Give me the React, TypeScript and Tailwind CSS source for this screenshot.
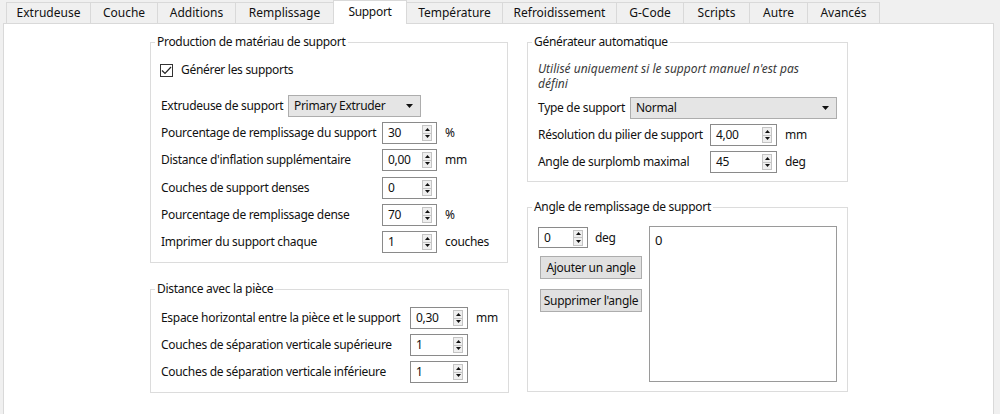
import React from "react";

const tabs = [
  { label: "Extrudeuse", w: "w-[85px]" },
  { label: "Couche", w: "w-[68px]" },
  { label: "Additions", w: "w-[79px]" },
  { label: "Remplissage", w: "w-[99px]" },
  { label: "Support", w: "w-[74px]", active: true },
  { label: "Température", w: "w-[97px]" },
  { label: "Refroidissement", w: "w-[115px]" },
  { label: "G-Code", w: "w-[68px]" },
  { label: "Scripts", w: "w-[67px]" },
  { label: "Autre", w: "w-[59px]" },
  { label: "Avancés", w: "w-[73px]" },
];

function SpinArrows() {
  return (
    <div className="w-[10px] h-[16px] mr-[4px] flex flex-col border border-[#c4c4c4] bg-[#efefef]">
      <div className="flex-1 flex items-center justify-center border-b border-[#c4c4c4]">
        <svg width="5" height="3" viewBox="0 0 5 3">
          <path d="M0 3 L2.5 0 L5 3 Z" fill="#111" />
        </svg>
      </div>
      <div className="flex-1 flex items-center justify-center">
        <svg width="5" height="3" viewBox="0 0 5 3">
          <path d="M0 0 L5 0 L2.5 3 Z" fill="#111" />
        </svg>
      </div>
    </div>
  );
}

function Spin({ value, w, h = "h-[22px]" }: { value: string; w: string; h?: string }) {
  return (
    <div className={`flex ${h} ${w} shrink-0 items-center border border-[#8a8a8a] bg-white`}>
      <span className="flex-1 pl-[5px] leading-none">{value}</span>
      <SpinArrows />
    </div>
  );
}

function Combo({ value, w }: { value: string; w: string }) {
  return (
    <div className={`flex h-[22px] ${w} shrink-0 items-center border border-[#adadad] bg-[#e5e5e5] pl-[5px] pr-[7px]`}>
      <span className="flex-1 leading-none">{value}</span>
      <svg width="7" height="4" viewBox="0 0 7 4">
        <path d="M0 0 L7 0 L3.5 4 Z" fill="#111" />
      </svg>
    </div>
  );
}

function Row({
  label,
  labelW,
  value,
  spinW,
  unit,
  mt = "mt-[5px]",
}: {
  label: string;
  labelW: string;
  value: string;
  spinW: string;
  unit?: string;
  mt?: string;
}) {
  return (
    <div className={`flex h-[22px] items-center ${mt}`}>
      <span className={`${labelW} shrink-0 whitespace-nowrap`}>{label}</span>
      <Spin value={value} w={spinW} />
      {unit && <span className="ml-[8px]">{unit}</span>}
    </div>
  );
}

function Group({
  title,
  className = "",
  children,
}: {
  title: string;
  className?: string;
  children: React.ReactNode;
}) {
  return (
    <fieldset className={`border border-[#dcdcdc] px-[10px] ${className}`}>
      <legend className="-ml-[6px] px-[2px] leading-[16px]">{title}</legend>
      {children}
    </fieldset>
  );
}

export default function App() {
  return (
    <div
      className="w-[1000px] h-[414px] bg-[#f0f0f0] flex flex-col overflow-hidden text-[12px] tracking-[-0.3px] text-[#111]"
      style={{ fontFamily: '"Noto Sans", "Open Sans", sans-serif' }}
    >
      <div className="flex h-[23px] items-end pl-[6px]">
        {tabs.map((t, i) =>
          t.active ? (
            <div
              key={t.label}
              className={`${t.w} relative z-10 -ml-px -mb-px h-[24px] flex items-center justify-center border border-b-0 border-[#d9d9d9] bg-white pb-[2px]`}
            >
              {t.label}
            </div>
          ) : (
            <div
              key={t.label}
              className={`${t.w} ${i === 0 ? "" : "-ml-px"} h-[21px] flex items-center justify-center border border-b-0 border-[#d9d9d9] bg-[#f0f0f0] tracking-normal`}
            >
              {t.label}
            </div>
          )
        )}
      </div>

      <div className="ml-[3px] mr-[6px] flex-1 border border-b-0 border-[#d9d9d9] bg-white">
        <div className="flex gap-[19px] pl-[146px] pt-[10px]">
          {/* left column */}
          <div className="w-[358px] flex flex-col">
            <Group title="Production de matériau de support" className="pb-[9px]">
              <div className="mt-[12px] flex h-[16px] items-center">
                <div className="-ml-px flex h-[13px] w-[13px] items-center justify-center border border-[#333]">
                  <svg width="11" height="9" viewBox="0 0 11 9">
                    <path d="M1 4.5 L4 7.5 L10 1" fill="none" stroke="#222" strokeWidth="1.2" />
                  </svg>
                </div>
                <span className="ml-[8px]">Générer les supports</span>
              </div>
              <div className="mt-[17px] flex h-[22px] items-center">
                <span className="w-[127px] shrink-0 whitespace-nowrap">Extrudeuse de support</span>
                <Combo value="Primary Extruder" w="w-[133px]" />
              </div>
              <Row label="Pourcentage de remplissage du support" labelW="w-[221px]" value="30" spinW="w-[55px]" unit="%" />
              <Row label="Distance d'inflation supplémentaire" labelW="w-[221px]" value="0,00" spinW="w-[55px]" unit="mm" />
              <Row label="Couches de support denses" labelW="w-[221px]" value="0" spinW="w-[55px]" mt="mt-[6px]" />
              <Row label="Pourcentage de remplissage dense" labelW="w-[221px]" value="70" spinW="w-[55px]" unit="%" />
              <Row label="Imprimer du support chaque" labelW="w-[221px]" value="1" spinW="w-[55px]" unit="couches" />
            </Group>

            <Group title="Distance avec la pièce" className="mt-[18px] pb-[9px]">
              <Row
                label="Espace horizontal entre la pièce et le support"
                labelW="w-[249px]"
                value="0,30"
                spinW="w-[58px]"
                unit="mm"
                mt="mt-[10px]"
              />
              <Row label="Couches de séparation verticale supérieure" labelW="w-[249px]" value="1" spinW="w-[58px]" />
              <Row label="Couches de séparation verticale inférieure" labelW="w-[249px]" value="1" spinW="w-[58px]" />
            </Group>
          </div>

          {/* right column */}
          <div className="w-[320px] flex flex-col">
            <Group title="Générateur automatique" className="pb-[8px]">
              <p className="mt-[11px] italic leading-[15px] tracking-normal text-[#3a3a3a]">
                Utilisé uniquement si le support manuel n'est pas
                <br />
                défini
              </p>
              <div className="mt-[6px] flex h-[22px] items-center">
                <span className="w-[92px] shrink-0 whitespace-nowrap">Type de support</span>
                <Combo value="Normal" w="w-[207px]" />
              </div>
              <Row label="Résolution du pilier de support" labelW="w-[172px]" value="4,00" spinW="w-[67px]" unit="mm" />
              <Row label="Angle de surplomb maximal" labelW="w-[172px]" value="45" spinW="w-[67px]" unit="deg" />
            </Group>

            <Group title="Angle de remplissage de support" className="mt-[17px] pb-[9px]">
              <div className="mt-[11px] flex">
                <div className="w-[111px] shrink-0 flex flex-col">
                  <div className="mt-px flex h-[21px] items-center">
                    <Spin value="0" w="w-[50px]" h="h-[21px]" />
                    <span className="ml-[7px]">deg</span>
                  </div>
                  <button className="ml-[2px] mt-[8px] h-[23px] w-[102px] border border-[#adadad] bg-[#e1e1e1] leading-none">
                    Ajouter un angle
                  </button>
                  <button className="ml-[2px] mt-[10px] h-[23px] w-[102px] border border-[#adadad] bg-[#e1e1e1] leading-none whitespace-nowrap">
                    Supprimer l'angle
                  </button>
                </div>
                <div className="h-[156px] w-[188px] border border-[#9a9a9a] bg-white px-[5px] pt-[4px] text-[13px]">
                  0
                </div>
              </div>
            </Group>
          </div>
        </div>
      </div>
    </div>
  );
}
